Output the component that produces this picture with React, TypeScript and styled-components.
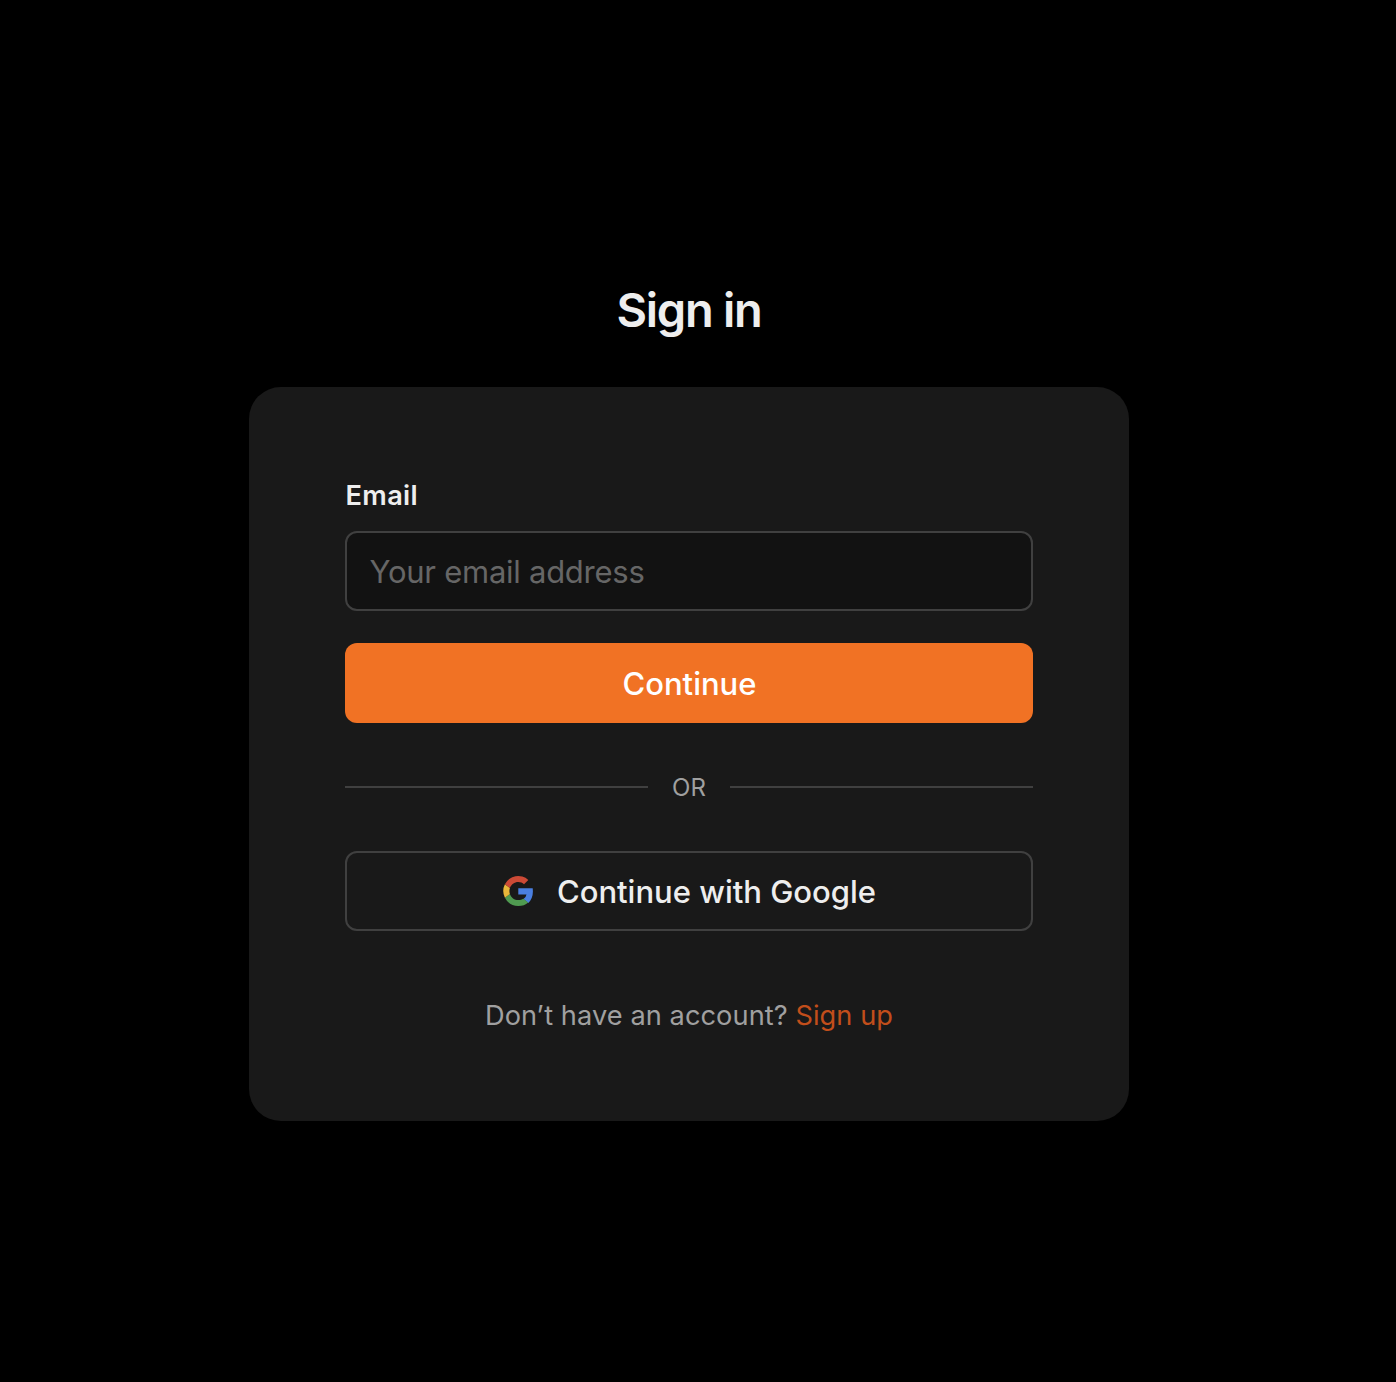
import React from "react";
import styled, { createGlobalStyle } from "styled-components";

const GlobalStyle = createGlobalStyle`
  * { box-sizing: border-box; }
  body { margin: 0; background: #000; font-family: Inter, "Liberation Sans", sans-serif; -webkit-font-smoothing: antialiased; }
`;

const Page = styled.main`
  display: flex;
  flex-direction: column;
  align-items: center;
  min-height: 100vh;
  padding: 282px 18px 0 0;
  background: #000;
`;

const Title = styled.h1`
  margin: 0 0 49px;
  font-size: 47px;
  line-height: 56px;
  font-weight: 600;
  letter-spacing: -1.25px;
  color: #eee;
`;

const Card = styled.section`
  display: flex;
  flex-direction: column;
  width: 880px;
  height: 734px;
  padding: 89px 96px 0;
  border-radius: 32px;
  background: #191919;
`;

const Label = styled.label`
  padding-left: 0.5px;
  font-size: 27.2px;
  line-height: 40px;
  font-weight: 600;
  letter-spacing: 0.35px;
  color: #eee;
  margin-bottom: 15px;
`;

const Field = styled.input`
  height: 80px;
  padding: 0 22.5px;
  border: 2px solid #404040;
  border-radius: 12px;
  background: #121212;
  color: #eee;
  font: 400 31px/48px Inter, "Liberation Sans", sans-serif;
  letter-spacing: -0.26px;
  outline: none;
  &::placeholder { color: #666; opacity: 1; }
`;

const Button = styled.button<{ $primary?: boolean }>`
  display: flex;
  align-items: center;
  justify-content: center;
  gap: 24px;
  height: 80px;
  padding: 0 0 0 1px;
  margin-top: ${(p) => (p.$primary ? "32px" : "0")};
  border: ${(p) => (p.$primary ? "0" : "2px solid #404040")};
  border-radius: 12px;
  background: ${(p) => (p.$primary ? "#f17224" : "transparent")};
  color: ${(p) => (p.$primary ? "#fff" : "#eee")};
  font: 500 31px/48px Inter, "Liberation Sans", sans-serif;
`;

const Text = styled.span`
  padding-top: 2px;
  white-space: nowrap;
`;

const Divider = styled.div`
  display: flex;
  align-items: center;
  gap: 24px;
  height: 32px;
  margin: 48px 0;
  font-size: 24px;
  line-height: 32px;
  color: #a0a0a0;
  &::before, &::after { content: ""; flex: 1; height: 2px; background: #404040; }
`;

const Footer = styled.p`
  margin: 64px 0 0;
  text-align: center;
  font-size: 27.2px;
  line-height: 41px;
  letter-spacing: 0.07px;
  color: #a0a0a0;
`;

const Link = styled.a`
  color: #c24e1b;
`;

const GoogleMark = () => (
  <svg width="30" height="30" viewBox="0 0 30 30" aria-hidden="true">
    <path fill="#4a7fe0" d="M29.7 12.3H15.3v6.1h8.2a7.2 7.2 0 0 1-3 4.7l4.8 3.8c2.9-2.7 4.6-6.7 4.6-11.4 0-1.1-.1-2.200-.2-3.200Z" />
    <path fill="#4f9a50" d="M15.300 30c4 0 7.400-1.300 9.900-3.600l-4.800-3.700c-1.300.9-3 1.400-5.100 1.400-3.900 0-7.200-2.600-8.400-6.200L1.900 21.700A15 15 0 0 0 15.300 30Z" />
    <path fill="#e8b73a" d="M6.900 17.900a9 9 0 0 1 0-5.800L1.900 8.300a15 15 0 0 0 0 13.400Z" />
    <path fill="#cc4a36" d="M15.300 6c2.200 0 4.200.8 5.700 2.200l4.300-4.300A14.900 14.900 0 0 0 1.900 8.300l5 3.800C8.100 8.500 11.400 6 15.300 6Z" />
  </svg>
);

export default function App() {
  return (
    <>
      <GlobalStyle />
      <Page>
        <Title>Sign in</Title>
        <Card>
          <Label htmlFor="email">Email</Label>
          <Field id="email" type="email" placeholder="Your email address" />
          <Button $primary><Text>Continue</Text></Button>
          <Divider><Text>OR</Text></Divider>
          <Button><GoogleMark /><Text>Continue with Google</Text></Button>
          <Footer>Don’t have an account? <Link>Sign up</Link></Footer>
        </Card>
      </Page>
    </>
  );
}
